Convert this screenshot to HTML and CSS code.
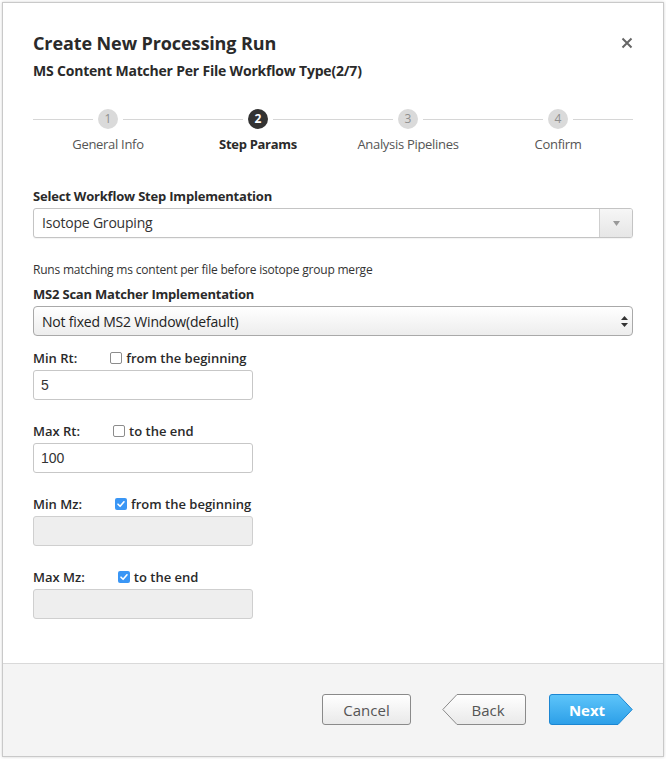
FILE: index.html
```html
<!DOCTYPE html>
<html lang="en">
<head>
<meta charset="utf-8">
<title>Create New Processing Run</title>
<link rel="stylesheet" href="styles.css">
</head>
<body>
<div class="modal">
  <div class="modal-body">
    <header class="head">
      <div class="titles">
        <h1 class="title">Create New Processing Run</h1>
        <h2 class="subtitle">MS Content Matcher Per File Workflow Type(2/7)</h2>
      </div>
      <button class="close" aria-label="Close">
        <svg width="12" height="12" viewBox="0 0 12 12"><path d="M1.5 1.5 L10.5 10.5 M10.5 1.5 L1.5 10.5" stroke="#666" stroke-width="2" stroke-linecap="butt"/></svg>
      </button>
    </header>

    <ol class="steps">
      <li class="step"><div class="track"><span class="line"></span><span class="dot">1</span><span class="line"></span></div><span class="step-label">General Info</span></li>
      <li class="step active"><div class="track"><span class="line"></span><span class="dot">2</span><span class="line"></span></div><span class="step-label">Step Params</span></li>
      <li class="step"><div class="track"><span class="line"></span><span class="dot">3</span><span class="line"></span></div><span class="step-label">Analysis Pipelines</span></li>
      <li class="step"><div class="track"><span class="line"></span><span class="dot">4</span><span class="line"></span></div><span class="step-label">Confirm</span></li>
    </ol>

    <div class="field first">
      <div class="field-label">Select Workflow Step Implementation</div>
      <div class="combo">
        <span class="combo-value">Isotope Grouping</span>
        <span class="combo-btn"><svg width="7" height="5" viewBox="0 0 7 5"><path d="M0 0 H7 L3.5 5 Z" fill="#999"/></svg></span>
      </div>
    </div>

    <p class="desc">Runs matching ms content per file before isotope group merge</p>

    <div class="field">
      <div class="field-label">MS2 Scan Matcher Implementation</div>
      <div class="native-select">
        <span class="native-value">Not fixed MS2 Window(default)</span>
        <svg class="updown" width="7" height="11" viewBox="0 0 7 11"><path d="M3.5 0 L7 4 H0 Z M0 7 H7 L3.5 11 Z" fill="#333"/></svg>
      </div>
    </div>

    <div class="range">
      <div class="range-head"><span class="range-label">Min Rt:</span><span class="check"><span class="box"></span>from the beginning</span></div>
      <input class="text-input" type="text" value="5">
    </div>

    <div class="range">
      <div class="range-head"><span class="range-label">Max Rt:</span><span class="check"><span class="box"></span>to the end</span></div>
      <input class="text-input" type="text" value="100">
    </div>

    <div class="range">
      <div class="range-head"><span class="range-label">Min Mz:</span><span class="check"><span class="box checked"><svg width="12" height="12" viewBox="0 0 12 12"><path d="M3 6.2 L5.1 8.3 L9 3.8" fill="none" stroke="#fff" stroke-width="1.6" stroke-linecap="round" stroke-linejoin="round"/></svg></span>from the beginning</span></div>
      <input class="text-input" type="text" value="" disabled>
    </div>

    <div class="range">
      <div class="range-head"><span class="range-label">Max Mz:</span><span class="check"><span class="box checked"><svg width="12" height="12" viewBox="0 0 12 12"><path d="M3 6.2 L5.1 8.3 L9 3.8" fill="none" stroke="#fff" stroke-width="1.6" stroke-linecap="round" stroke-linejoin="round"/></svg></span>to the end</span></div>
      <input class="text-input" type="text" value="" disabled>
    </div>
  </div>

  <footer class="foot">
    <button class="btn cancel">Cancel</button>
    <button class="btn arrow back">
      <svg class="shape" viewBox="0 0 84 31" preserveAspectRatio="none">
        <defs><linearGradient id="gBack" x1="0" y1="0" x2="0" y2="1"><stop offset="0" stop-color="#ffffff"/><stop offset="1" stop-color="#e9e9e9"/></linearGradient></defs>
        <path d="M15 0.5 H81 Q83.5 0.5 83.5 3 V28 Q83.5 30.5 81 30.5 H15 L0.8 15.5 Z" fill="url(#gBack)" stroke="#8a8a8a" stroke-width="1"/>
      </svg>
      <span class="btn-text">Back</span>
    </button>
    <button class="btn arrow next">
      <svg class="shape" viewBox="0 0 84 31" preserveAspectRatio="none">
        <defs><linearGradient id="gNext" x1="0" y1="0" x2="0" y2="1"><stop offset="0" stop-color="#5ec5fa"/><stop offset="1" stop-color="#2c9fe8"/></linearGradient></defs>
        <path d="M3 0.5 H69 L83.2 15.5 L69 30.5 H3 Q0.5 30.5 0.5 28 V3 Q0.5 0.5 3 0.5 Z" fill="url(#gNext)" stroke="#1b86d2" stroke-width="1"/>
      </svg>
      <span class="btn-text">Next</span>
    </button>
  </footer>
</div>
</body>
</html>
```

FILE: styles.css
```css
* { box-sizing: border-box; }

html, body {
  margin: 0;
  padding: 0;
  background: #ffffff;
}

body {
  font-family: "Open Sans", "DejaVu Sans", sans-serif;
  color: #333;
}

.modal {
  margin: 2px;
  height: 755px;
  border: 1px solid #c9c9c9;
  box-shadow: 0 0 3px rgba(0, 0, 0, 0.18);
  background: #fff;
  display: flex;
  flex-direction: column;
}

.modal-body {
  flex: 1;
  padding: 28px 30px 0 30px;
}

.head {
  display: flex;
  justify-content: space-between;
  align-items: flex-start;
}

.title {
  margin: 0;
  font-size: 18px;
  line-height: 24px;
  font-weight: 700;
  color: #2a2a2a;
  letter-spacing: -0.1px;
}

.subtitle {
  margin: 6px 0 0 0;
  font-size: 14px;
  line-height: 20px;
  font-weight: 700;
  color: #2a2a2a;
  letter-spacing: -0.2px;
}

.close {
  margin: 6px 0 0 0;
  padding: 0;
  border: 0;
  background: none;
  width: 12px;
  height: 12px;
  display: flex;
}

.steps {
  list-style: none;
  margin: 28px 0 0 0;
  padding: 0;
  display: flex;
}

.step {
  flex: 1;
  display: flex;
  flex-direction: column;
  align-items: center;
}

.track {
  width: 100%;
  display: flex;
  align-items: center;
}

.line {
  flex: 1;
  height: 1px;
  background: #d6d6d6;
}

.dot {
  width: 20px;
  height: 20px;
  margin: 0 5px;
  border-radius: 50%;
  background: #dadada;
  color: #8e8e8e;
  font-size: 12px;
  line-height: 20px;
  text-align: center;
}

.step-label {
  margin-top: 6px;
  font-size: 13px;
  line-height: 18px;
  color: #555;
  letter-spacing: -0.3px;
}

.step.active .dot {
  background: #333;
  color: #fff;
  font-weight: 700;
}

.step.active .step-label {
  color: #2a2a2a;
  font-weight: 700;
}

.field.first {
  margin-top: 34px;
}

.field-label {
  font-size: 13px;
  line-height: 18px;
  font-weight: 700;
  color: #2a2a2a;
  letter-spacing: -0.2px;
  margin-bottom: 3px;
}

.combo {
  height: 30px;
  border: 1px solid #c4c4c4;
  border-radius: 3px;
  display: flex;
  align-items: stretch;
  background: #fff;
  box-shadow: 0 1px 1px rgba(0, 0, 0, 0.05);
}

.combo-value {
  flex: 1;
  padding-left: 8px;
  font-size: 14px;
  line-height: 28px;
  color: #333;
  letter-spacing: -0.2px;
}

.combo-btn {
  width: 33px;
  border-left: 1px solid #cfcfcf;
  background: linear-gradient(#f6f6f6, #e6e6e6);
  display: flex;
  align-items: center;
  justify-content: center;
  border-radius: 0 2px 2px 0;
}

.desc {
  margin: 23px 0 7px 0;
  font-size: 12px;
  line-height: 17px;
  color: #333;
  letter-spacing: -0.2px;
}

.native-select {
  height: 30px;
  border: 1px solid #a9a9a9;
  border-radius: 4px;
  background: linear-gradient(#ffffff, #ededed);
  display: flex;
  align-items: center;
  justify-content: space-between;
  padding: 0 4px 0 8px;
}

.native-value {
  font-size: 14px;
  color: #222;
  letter-spacing: -0.2px;
}

.range {
  margin-top: 13px;
}

.range + .range {
  margin-top: 22px;
}

.range-head {
  display: flex;
  align-items: center;
  height: 18px;
  margin-bottom: 3px;
  font-size: 13px;
  font-weight: 600;
  color: #2a2a2a;
}

.range-label {
  margin-right: 33px;
}

.check {
  display: flex;
  align-items: center;
  gap: 4px;
}

.box {
  width: 12px;
  height: 12px;
  border: 1px solid #8c8c8c;
  border-radius: 2px;
  background: #fff;
  display: flex;
}

.box.checked {
  border: 0;
  background: #3a96f5;
}

.text-input {
  display: block;
  width: 220px;
  height: 30px;
  padding: 0 7px;
  border: 1px solid #c7c7c7;
  border-radius: 3px;
  font-family: "Liberation Sans", Arial, sans-serif;
  font-size: 14px;
  color: #333;
  background: #fff;
  outline: none;
}

.text-input:disabled {
  background: #eeeeee;
  border-color: #cfcfcf;
}

.foot {
  height: 93px;
  border-top: 1px solid #d9d9d9;
  background: #f4f4f4;
  display: flex;
  justify-content: flex-end;
  align-items: flex-start;
  padding: 30px 30px 0 0;
}

.btn {
  height: 31px;
  font-family: "Open Sans", "DejaVu Sans", sans-serif;
  font-size: 15px;
  padding: 0;
  cursor: pointer;
}

.cancel {
  width: 89px;
  border: 1px solid #8a8a8a;
  border-radius: 3px;
  background: linear-gradient(#ffffff, #e9e9e9);
  color: #555;
  margin-right: 31px;
}

.arrow {
  position: relative;
  width: 84px;
  border: 0;
  background: none;
}

.arrow .shape {
  position: absolute;
  left: 0;
  top: 0;
  width: 84px;
  height: 31px;
}

.btn-text {
  position: relative;
}

.back {
  color: #555;
  padding-left: 8px;
  margin-right: 23px;
}

.next {
  color: #fff;
  font-weight: 700;
  padding-right: 8px;
}
```
